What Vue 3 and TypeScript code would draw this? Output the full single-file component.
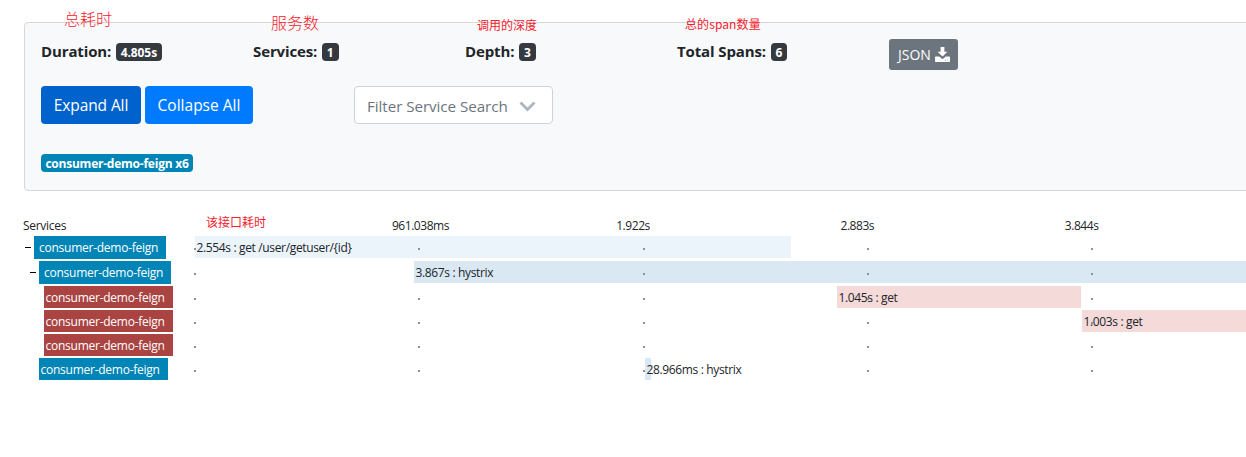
<script setup lang="ts">
interface Span {
  label: string
  tone: 'blue' | 'red'
  indent: number
  width: number
  expandable: boolean
  rowHeight: number
  barStart: number
  barWidth: number
  barTone: 'pale' | 'blue' | 'red' | 'none'
  text: string
}

const stats = [
  { name: 'Duration:', value: '4.805s' },
  { name: 'Services:', value: '1' },
  { name: 'Depth:', value: '3' },
  { name: 'Total Spans:', value: '6' },
]

const ticks = ['', '961.038ms', '1.922s', '2.883s', '3.844s']

const spans: Span[] = [
  { label: 'consumer-demo-feign', tone: 'blue', indent: 10, width: 132, expandable: true, rowHeight: 25, barStart: 0, barWidth: 596, barTone: 'pale', text: '2.554s : get /user/getuser/{id}' },
  { label: 'consumer-demo-feign', tone: 'blue', indent: 15, width: 132, expandable: true, rowHeight: 25, barStart: 219, barWidth: 900, barTone: 'blue', text: '3.867s : hystrix' },
  { label: 'consumer-demo-feign', tone: 'red', indent: 20, width: 129, expandable: false, rowHeight: 24, barStart: 642, barWidth: 244, barTone: 'red', text: '1.045s : get' },
  { label: 'consumer-demo-feign', tone: 'red', indent: 20, width: 129, expandable: false, rowHeight: 24, barStart: 887, barWidth: 234, barTone: 'red', text: '1.003s : get' },
  { label: 'consumer-demo-feign', tone: 'red', indent: 20, width: 129, expandable: false, rowHeight: 24, barStart: 0, barWidth: 0, barTone: 'none', text: '' },
  { label: 'consumer-demo-feign', tone: 'blue', indent: 15, width: 129, expandable: false, rowHeight: 24, barStart: 450, barWidth: 6, barTone: 'blue', text: '28.966ms : hystrix' },
]
</script>

<template>
  <main class="page">
    <section class="card">
      <div class="stats">
        <div v-for="s in stats" :key="s.name" class="stat">
          <strong>{{ s.name }}</strong><span class="badge">{{ s.value }}</span>
        </div>
        <button class="json" type="button">
          <span>JSON</span>
          <svg width="15" height="15" viewBox="0 0 15 15">
            <path d="M5.6 0h3.8v4.7h3L7.5 9.6 2.6 4.7h3z" fill="#fff" />
            <path d="M.8 9.6h3.5l2.2 1.8q1 .7 2 0l2.2-1.8h3.5q.8 0 .8.8v3.6q0 .9-.8.9H.8q-.8 0-.8-.9v-3.6q0-.8.8-.8z" fill="#fff" />
            <path d="M10.2 12.8h.8v.8h-.8zM12.4 12.8h.8v.8h-.8z" fill="#6c757d" />
          </svg>
        </button>
      </div>
      <div class="controls">
        <button class="btn active" type="button"><span>Expand All</span></button>
        <button class="btn" type="button"><span>Collapse All</span></button>
        <div class="filter">
          <span>Filter Service Search</span>
          <svg width="17" height="11" viewBox="0 0 17 11">
            <path d="M1.5 1.5L8.5 8.5L15.5 1.5" fill="none" stroke="#adb5bd" stroke-width="2.8" />
          </svg>
        </div>
      </div>
      <div class="services"><span class="service-badge">consumer-demo-feign x6</span></div>
    </section>

    <section class="timeline">
      <div class="row header">
        <div class="side">Services</div>
        <div class="ticks">
          <span v-for="(t, i) in ticks" :key="i">{{ t }}</span>
        </div>
      </div>
      <div v-for="(s, i) in spans" :key="i" class="row" :style="{ height: s.rowHeight + 'px' }">
        <div class="side">
          <span class="gutter" :style="{ width: s.indent + 'px' }"><i v-if="s.expandable" class="minus"></i></span>
          <span class="label" :class="[s.tone, { parent: s.expandable }]" :style="{ width: s.width + 'px' }">{{ s.label }}</span>
        </div>
        <div class="track">
          <div v-if="s.text" class="bar" :class="s.barTone" :style="{ marginLeft: s.barStart + 'px', width: s.barWidth + 'px' }">
            <span>{{ s.text }}</span>
          </div>
          <div class="dots"><i v-for="n in 5" :key="n" :class="{ hidden: i === 1 && n === 2 }"></i></div>
        </div>
      </div>
    </section>

    <span class="note n1">总耗时</span>
    <span class="note n2">服务数</span>
    <span class="note n3">调用的深度</span>
    <span class="note n4">总的span数量</span>
    <span class="note n5">该接口耗时</span>
  </main>
</template>

<style>
body { margin: 0; background: #fff; overflow: hidden; }
</style>

<style scoped>
* { box-sizing: border-box; }
.page {
  position: relative;
  width: 1246px;
  height: 457px;
  padding: 22px 0 0 24px;
  overflow: hidden;
  color: #212529;
  font-family: "Open Sans", "Noto Sans", sans-serif;
}
.card {
  width: 1300px;
  height: 169px;
  padding: 16px;
  background: #f8f9fa;
  border: 1px solid #d5d7d9;
  border-radius: 4px;
}
.stats { display: grid; grid-template-columns: repeat(5, 212px); height: 47px; }
.stat { display: flex; align-items: flex-start; white-space: nowrap; font-size: 15px; line-height: 24px; }
.stat strong { font-weight: 700; letter-spacing: -0.12px; }
.badge {
  height: 18px;
  margin: 4px 0 0 4.5px;
  padding: 0 5px;
  border-radius: 4px;
  background: #343a40;
  color: #fff;
  font-size: 12px;
  font-weight: 700;
  line-height: 19px;
  letter-spacing: -0.1px;
}
.json {
  display: flex;
  align-items: center;
  gap: 4px;
  width: 69px;
  height: 31px;
  padding: 0 0 0 9px;
  border: 0;
  border-radius: 3px;
  background: #6c757d;
  color: #fff;
  font: 14px/21px "Open Sans", sans-serif;
}
.controls { display: flex; height: 38px; }
.btn {
  width: 100px;
  height: 38px;
  padding: 0;
  margin-right: 4px;
  border: 0;
  border-radius: 4px;
  background: #007bff;
  color: #fff;
  font: 15.5px/38px "Open Sans", sans-serif;
  letter-spacing: -0.1px;
  white-space: nowrap;
}
.btn.active { background: #0062cc; }
.btn + .btn { width: 108px; margin-right: 101px; letter-spacing: 0; }
.filter {
  display: flex;
  align-items: center;
  justify-content: space-between;
  width: 199px;
  height: 38px;
  padding: 2px 16px 0 12px;
  border: 1px solid #ced4da;
  border-radius: 4px;
  background: #fff;
  color: #6c757d;
  font-size: 15.2px;
  letter-spacing: -0.06px;
  white-space: nowrap;
}
.services { display: flex; padding-top: 30px; }
.service-badge {
  width: 152px;
  height: 18px;
  border-radius: 4px;
  background: #0085b6;
  color: #fff;
  font-size: 12px;
  font-weight: 700;
  line-height: 19px;
  text-align: center;
  letter-spacing: -0.23px;
  white-space: nowrap;
}
.timeline { padding-top: 25px; font-size: 12px; }
.row { display: grid; grid-template-columns: 171px 1121px; }
.header { height: 20px; line-height: 20px; }
.header .side { margin-left: -1px; letter-spacing: -0.3px; }
.ticks { display: grid; grid-template-columns: repeat(5, 224.3px); margin-left: -27.4px; letter-spacing: -0.45px; }
.side { display: flex; white-space: nowrap; }
.gutter { flex: none; padding-top: 11px; }
.minus { display: block; width: 6px; height: 1px; margin-left: auto; margin-right: 3px; background: #000; }
.label { height: 22px; padding-left: 1.5px; color: #fff; line-height: 24px; letter-spacing: -0.25px; }
.label.parent { height: 23px; padding-left: 5px; }
.label.blue { background: #0085b6; }
.label.red { background: #a94442; }
.track { display: grid; height: 22px; }
.bar, .dots { grid-area: 1 / 1; }
.bar { height: 22px; padding-left: 1.5px; line-height: 24px; white-space: nowrap; letter-spacing: -0.35px; }
.bar.pale { background: #ebf3fb; }
.bar.blue { background: #d9e8f3; }
.bar.red { background: #f5dada; }
.dots { display: grid; grid-template-columns: repeat(5, 224.3px); margin-left: -1px; padding-top: 12px; }
.dots i { width: 2px; height: 2px; background: #8793a0; }
.dots .hidden { visibility: hidden; }
.note { position: absolute; color: #f5222d; font-family: "Noto Sans CJK SC", sans-serif; white-space: nowrap; line-height: 20px; font-size: 12px; }
.n1 { left: 64px; top: 8px; font-size: 16px; font-weight: 300; }
.n2 { left: 271px; top: 12px; font-size: 16px; font-weight: 300; }
.n3 { left: 477px; top: 15px; }
.n4 { left: 685px; top: 14px; letter-spacing: 0.1px; }
.n5 { left: 206px; top: 212px; }
</style>
